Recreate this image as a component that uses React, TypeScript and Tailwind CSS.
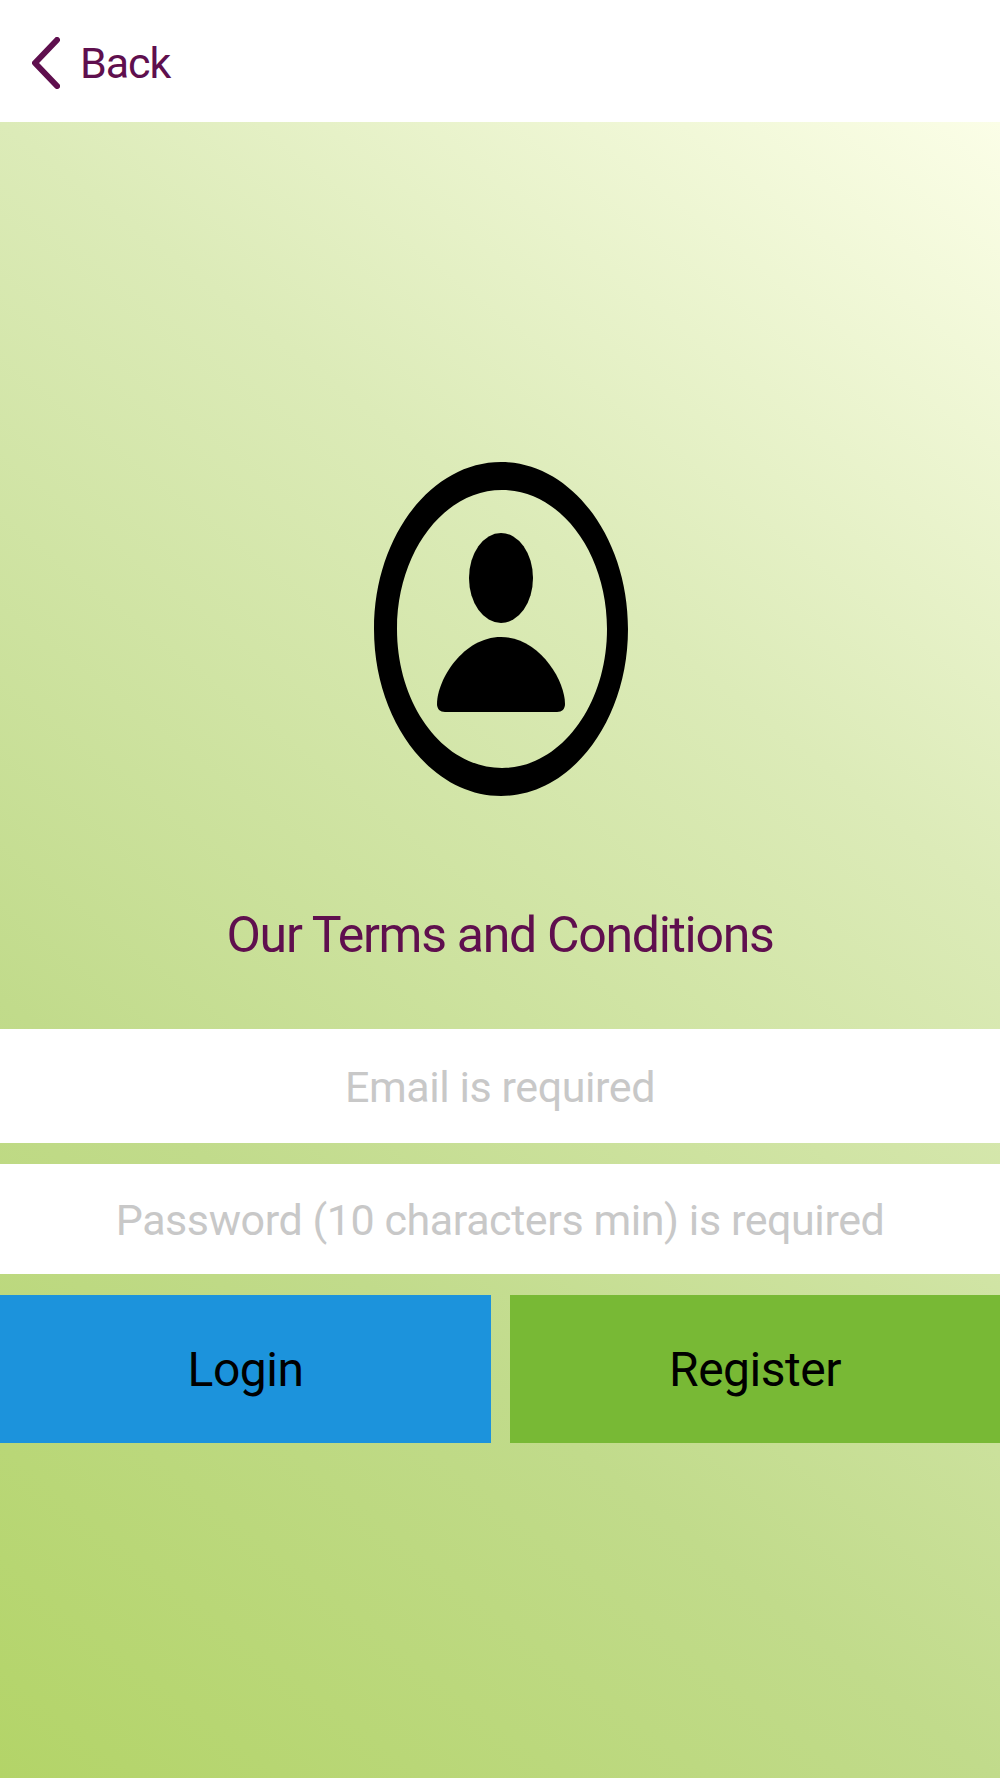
export default function App() {
  return (
    <div className="flex h-[1778px] w-[1000px] flex-col font-['Roboto','Liberation_Sans',sans-serif]">
      <header className="flex h-[122px] items-center gap-[20px] bg-white pl-[32px] pt-[4px] text-[#5f0f4e]">
        <svg width="28" height="52" viewBox="0 0 28 52" fill="none">
          <path d="M25 3 L3 26 L25 49" stroke="currentColor" strokeWidth="6" strokeLinecap="round" strokeLinejoin="round" />
        </svg>
        <span className="text-[43px] leading-none tracking-[-1.1px]">Back</span>
      </header>
      <main className="flex flex-1 flex-col bg-[linear-gradient(218deg,#fbfee7_0%,#dcebb8_32%,#c1db8b_68%,#b3d468_100%)]">
        <div className="flex flex-col items-center pt-[340px]">
          <svg className="ml-[2px]" width="254" height="334" viewBox="0 0 254 334" fill="#000">
            <path
              fillRule="evenodd"
              d="M127 0 C197 0 254 75 254 167 C254 259 197 334 127 334 C57 334 0 259 0 167 C0 75 57 0 127 0 Z M128 28 C70 28 23 90 23 167 C23 244 70 306 128 306 C186 306 233 244 233 167 C233 90 186 28 128 28 Z"
            />
            <ellipse cx="127" cy="116" rx="32" ry="45" />
            <path d="M127 175 C165 175 191 218 191 242 C191 247 188 250 183 250 L71 250 C66 250 63 247 63 242 C63 218 89 175 127 175 Z" />
          </svg>
          <h1 className="mt-[113px] text-[50px] leading-[52px] font-normal tracking-[-1.3px] text-[#5f0f4e]">
            Our Terms and Conditions
          </h1>
        </div>
        <div className="mt-[68px] flex h-[114px] items-center justify-center bg-white pt-[2px] text-[43px] tracking-[-0.42px] text-[#c8c8c8]">
          Email is required
        </div>
        <div className="mt-[21px] flex h-[110px] items-center justify-center bg-white pt-[2px] text-[43px] tracking-[-0.42px] text-[#c8c8c8]">
          Password (10 characters min) is required
        </div>
        <div className="mt-[21px] flex h-[148px] justify-between text-[48px] tracking-[-0.5px] text-black">
          <div className="flex w-[491px] items-center justify-center bg-[#1c93dc] pt-[2px]">Login</div>
          <div className="flex w-[490px] items-center justify-center bg-[#78b935] pt-[2px]">Register</div>
        </div>
      </main>
    </div>
  );
}
